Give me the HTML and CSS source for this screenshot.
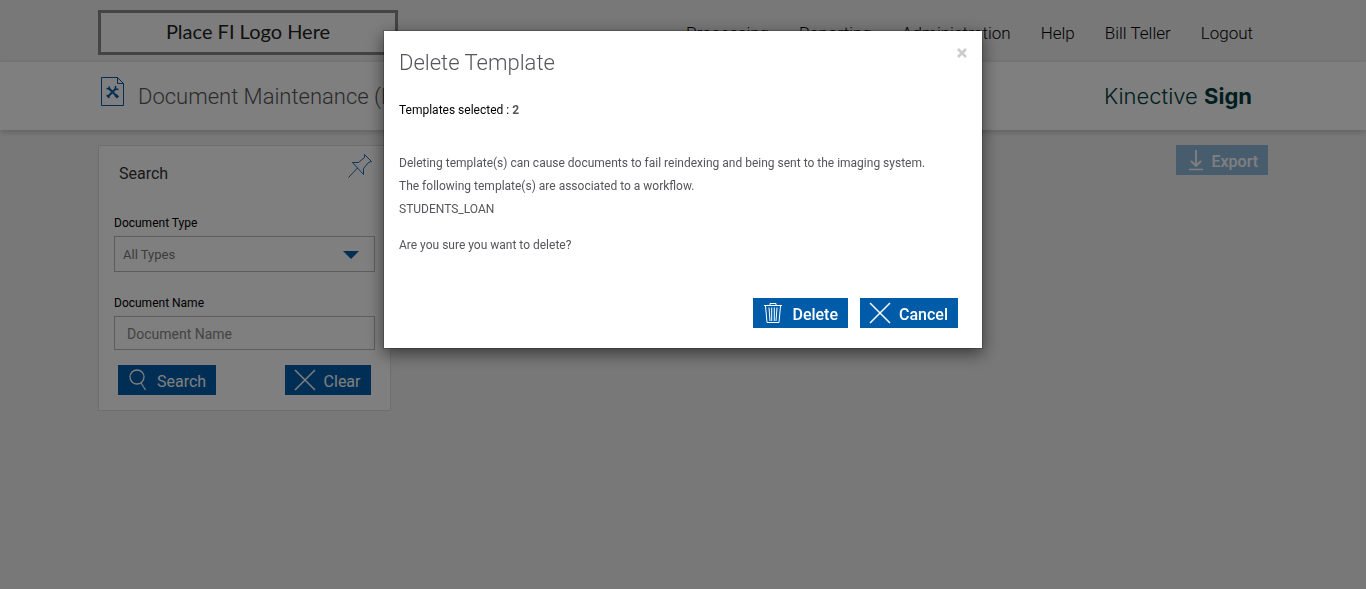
FILE: index.html
```html
<!DOCTYPE html>
<html lang="en">
<head>
  <meta charset="UTF-8">
  <meta name="viewport" content="width=device-width, initial-scale=1.0">
  <title>Document Maintenance</title>
  <link rel="stylesheet" href="styles.css">
</head>
<body>

<header class="topbar">
  <div class="container topbar-inner">
    <div class="fi-logo">Place FI Logo Here</div>
    <nav class="main-nav">
      <a href="#">Processing</a>
      <a href="#">Reporting</a>
      <a href="#">Administration</a>
      <a href="#">Help</a>
      <a href="#">Bill Teller</a>
      <a href="#">Logout</a>
    </nav>
  </div>
</header>

<div class="titlebar">
  <div class="container titlebar-inner">
    <svg class="page-icon" width="26" height="32" viewBox="0 0 26 32" fill="none" stroke="#005ca9">
      <path d="M1.500 1.500H17.500L23.500 7.500V29.500H1.500Z M17.500 1.500V7.500H23.500"/>
      <path d="M9 12.500L17.500 21M16 12.500L7.500 21" stroke-width="2"/>
      <path d="M6.500 12.500L9.500 13L9 10.500M15.500 10L15.500 13L18.500 13.500M6.500 19.500L8.500 20L9 22" stroke-width="1.600"/>
      <path d="M15.500 19L18 21.500" stroke-width="3"/>
    </svg>
    <h1>Document Maintenance (Delete)</h1>
    <div class="brand">Kinective <b>Sign</b></div>
  </div>
</div>

<main class="container content">
  <form class="search-panel">
    <div class="panel-head">
      <h2>Search</h2>
      <svg class="pin" width="24" height="26" viewBox="0 0 24 26" fill="none" stroke="#005ca9" stroke-width="0.900">
        <path d="M16.500 0.500L23.500 7.500L20.500 8.500L15.500 14.500L15.500 20.500L4.500 8.500L10.500 8.500L16.500 3.500Z M9.500 14L0.500 23.500"/>
      </svg>
    </div>
    <label for="docType">Document Type</label>
    <div class="select-wrap">
      <select id="docType">
        <option>All Types</option>
      </select>
    </div>
    <label for="docName">Document Name</label>
    <input type="text" id="docName" placeholder="Document Name">
    <div class="panel-actions">
      <button type="button" class="btn">
        <svg width="22" height="22" viewBox="0 0 22 22" fill="none" stroke="#fff" stroke-width="1.300"><circle cx="10" cy="8" r="7"/><path d="M14 14L18.500 21"/></svg>
        Search
      </button>
      <button type="button" class="btn">
        <svg width="22" height="22" viewBox="0 0 22 22" stroke="#fff" stroke-width="1.500"><path d="M1 1L21 21M21 1L1 21"/></svg>
        Clear
      </button>
    </div>
  </form>
  <button type="button" class="btn btn-export" disabled>
    <svg width="18" height="22" viewBox="0 0 18 22" fill="none" stroke="#fff" stroke-width="1.800"><path d="M11 1V17M6 12L11 17L16 12"/><path d="M4 20.500H18" stroke-width="1.500"/></svg>
    Export
  </button>
</main>

<div class="backdrop">
  <div class="modal" role="dialog" aria-modal="true" aria-labelledby="modalTitle">
    <div class="modal-header">
      <h2 id="modalTitle">Delete Template</h2>
      <button type="button" class="close" aria-label="Close">
        <svg width="10" height="10" viewBox="0 0 10 10" stroke="#ccc" stroke-width="2.600"><path d="M1 1L9 9M9 1L1 9"/></svg>
      </button>
    </div>
    <div class="modal-body">
      <p class="selected">Templates selected : <b>2</b></p>
      <p>Deleting template(s) can cause documents to fail reindexing and being sent to the imaging system.</p>
      <p>The following template(s) are associated to a workflow.</p>
      <p>STUDENTS_LOAN</p>
      <p class="confirm">Are you sure you want to delete?</p>
    </div>
    <div class="modal-footer">
      <button type="button" class="btn">
        <svg width="22" height="22" viewBox="0 0 22 22" fill="none" stroke="#fff" stroke-width="1"><path d="M2 3.500H20M8 3V1.500H14V3M3.500 4L5 20.500H17L18.500 4M7 5.500L8 19M9.700 5.500V19M12.300 5.500V19M15 5.500L14 19"/></svg>
        Delete
      </button>
      <button type="button" class="btn">
        <svg width="22" height="22" viewBox="0 0 22 22" stroke="#fff" stroke-width="1.500"><path d="M1 1L21 21M21 1L1 21"/></svg>
        Cancel
      </button>
    </div>
  </div>
</div>

</body>
</html>
```
FILE: styles.css
```css
:root {
  --blue: #005ca9;
  --page-bg: #f1f1f1;
  --text: #55565a;
}

* {
  margin: 0;
  padding: 0;
  box-sizing: border-box;
}

body {
  font-family: Roboto, sans-serif;
  font-size: 12px;
  color: var(--text);
  background: var(--page-bg);
}

.container {
  max-width: 1170px;
  margin: 0 auto;
}

/* Top bar */
.topbar-inner {
  display: flex;
  justify-content: space-between;
  align-items: flex-start;
  height: 62px;
  padding-top: 10px;
}

.fi-logo {
  width: 300px;
  height: 45px;
  border: 3px solid #888;
  background: #fbfbfb;
  color: #222;
  font-family: Lato, sans-serif;
  font-size: 20px;
  line-height: 36px;
  text-align: center;
}

.main-nav {
  display: flex;
  gap: 30px;
  padding: 12px 15px 0 0;
}

.main-nav a {
  color: #000;
  font-size: 17px;
  font-weight: 300;
  line-height: 22px;
  text-decoration: none;
}

/* Page title */
.titlebar {
  background: #fff;
  box-shadow: 0 2px 6px rgba(0, 0, 0, 0.2);
}

.titlebar-inner {
  display: flex;
  align-items: center;
  height: 68px;
  padding: 0 16px 0 2px;
}

.page-icon {
  margin-bottom: 8px;
}

.titlebar h1 {
  flex: 1;
  margin-left: 12px;
  font-size: 22px;
  font-weight: 300;
}

.brand {
  color: #003c40;
  font-family: Inter, sans-serif;
  font-size: 22px;
  font-weight: 300;
}

.brand b {
  font-weight: 700;
}

/* Content */
.content {
  display: flex;
  justify-content: space-between;
  align-items: flex-start;
  padding-top: 15px;
}

.search-panel {
  flex: 0 0 25%;
  padding: 8px 15px 15px;
  background: #fff;
  border: 1px solid #ddd;
}

.panel-head {
  display: flex;
  justify-content: space-between;
  padding: 0 3px 0 5px;
  margin-bottom: 25px;
  height: 36px;
}

.panel-head h2 {
  color: #333;
  font-size: 16px;
  font-weight: 400;
  line-height: 40px;
}

.search-panel label {
  display: block;
  color: #000;
  line-height: 16px;
  margin-bottom: 5px;
}

.select-wrap {
  position: relative;
  margin-bottom: 23px;
}

.select-wrap::after {
  content: "";
  position: absolute;
  top: 15px;
  right: 16px;
  border: 8px solid transparent;
  border-top-color: var(--blue);
  border-bottom: 0;
  pointer-events: none;
}

select,
input {
  display: block;
  width: 100%;
  border: 1px solid #bbb;
  border-radius: 0;
  background: #fff;
  color: #777;
  font-family: inherit;
}

select {
  appearance: none;
  height: 36px;
  padding: 0 8px;
  font-size: 13px;
}

input {
  height: 34px;
  padding: 2px 12px 0;
  font-size: 14px;
}

input::placeholder {
  color: #888;
}

.panel-actions {
  display: flex;
  justify-content: space-between;
  padding: 15px 4px 0;
}

.btn {
  display: flex;
  align-items: center;
  gap: 8px;
  height: 30px;
  padding: 4px 10px 0 9px;
  border: 0;
  background: var(--blue);
  color: #fff;
  font-family: inherit;
  font-size: 16px;
  line-height: 18px;
  cursor: pointer;
}

.btn svg {
  flex: none;
  margin-bottom: 5px;
}

.btn-export {
  background: #8fbbdc;
  font-weight: 500;
  cursor: default;
}

/* Modal */
.backdrop {
  position: fixed;
  inset: 0;
  padding: 30px 10px;
  background: rgba(0, 0, 0, 0.5);
}

.modal {
  max-width: 600px;
  margin: 0 auto;
  background: #fff;
  background-clip: padding-box;
  border: 1px solid rgba(0, 0, 0, 0.2);
  box-shadow: 0 5px 15px rgba(0, 0, 0, 0.5);
}

.modal-header {
  display: flex;
  justify-content: space-between;
  align-items: flex-start;
  padding: 17px 15px 0;
}

.modal-header h2 {
  font-size: 22px;
  font-weight: 300;
  line-height: 30px;
}

.close {
  display: flex;
  border: 0;
  background: none;
  cursor: pointer;
}

.modal-body {
  padding: 21px 15px 0;
  line-height: 23px;
}

.modal-body .selected {
  color: #000;
  margin-bottom: 30px;
}

.selected b {
  color: var(--text);
}

.confirm {
  margin-top: 13px;
}

.modal-footer {
  display: flex;
  justify-content: flex-end;
  gap: 12px;
  padding: 41px 24px 20px;
}

.modal-footer .btn {
  font-weight: 500;
}
```
